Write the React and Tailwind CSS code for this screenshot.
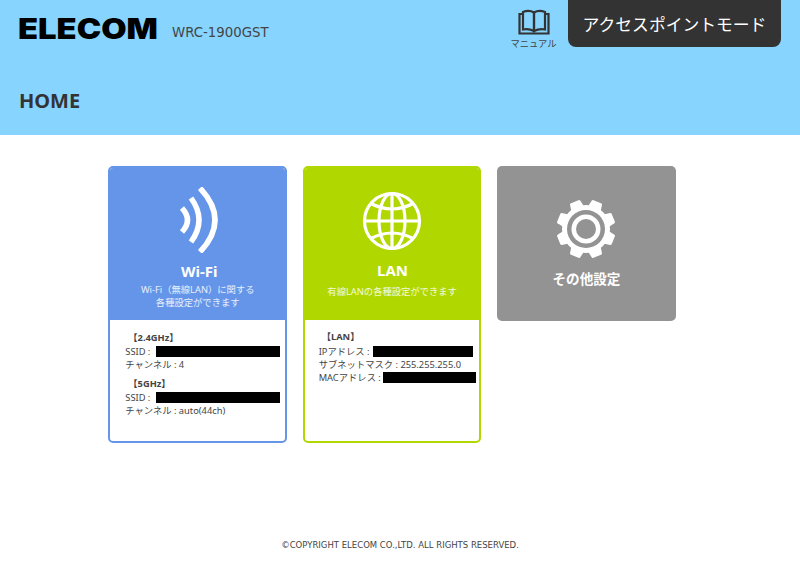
const font = { fontFamily: '"DejaVu Sans", "Noto Sans CJK JP", sans-serif' }
const noto = { fontFamily: '"Noto Sans", "Noto Sans CJK JP", sans-serif' }

function WifiIcon() {
    return (
        <svg width="40" height="66" viewBox="0 0 40 66" fill="none" stroke="white" strokeWidth="5.5">
            <path d="M2 21Q13 33 2 45" />
            <path d="M11 11Q27 33 11 55" />
            <path d="M20 1Q50 33 20 65" />
        </svg>
    )
}

function GlobeIcon() {
    return (
        <svg width="60" height="60" viewBox="0 0 60 60" fill="none" stroke="white" strokeWidth="3.2">
            <circle cx="30" cy="30" r="27.5" />
            <ellipse cx="30" cy="30" rx="13" ry="27.5" />
            <path d="M30 2.5V57.5M2.5 30H57.5" />
            <path d="M8 12Q30 24 52 12M8 48Q30 36 52 48" />
        </svg>
    )
}

function GearIcon() {
    const teeth = [22.5, 67.5, 112.5, 157.5, 202.5, 247.5, 292.5, 337.5]
    return (
        <svg width="60" height="60" viewBox="0 0 60 60">
            {teeth.map((a) => (
                <path
                    key={a}
                    d="M22.5 12L24.5 1.5Q24.8 0.5 26 0.5H34Q35.2 0.5 35.5 1.5L37.5 12Z"
                    fill="white"
                    transform={`rotate(${a} 30 30)`}
                />
            ))}
            <circle cx="30" cy="30" r="24" fill="white" />
            <circle cx="30" cy="30" r="19" fill="#939393" />
            <circle cx="30" cy="30" r="14.5" fill="white" />
            <circle cx="30" cy="30" r="10" fill="#939393" />
        </svg>
    )
}

function BookIcon() {
    return (
        <svg width="32" height="26" viewBox="0 0 32 26" fill="none" stroke="#333" strokeWidth="2.2">
            <path d="M5 3Q11 0.5 16 3.5V22Q11 19.5 5 20.5Z" />
            <path d="M27 3Q21 0.5 16 3.5V22Q21 19.5 27 20.5Z" />
            <path d="M5 5H1.5V24.5H30.5V5H27" />
        </svg>
    )
}

function Masked({ className }) {
    return <span className={`inline-block h-[11px] bg-black align-[-2px] ${className}`} />
}

function App() {
    return (
        <div className="min-h-[569px] bg-white text-[#333]" style={font}>
            <header className="h-[135px] bg-[#87d4ff] relative">
                <div className="flex items-start justify-between">
                    <div className="flex items-center pl-[18px] pt-[12px]">
                        <span
                            className="w-[139px] block origin-left scale-x-[1.17] text-[28px] leading-[34px] font-black text-black"
                            style={{ fontFamily: 'Inter, sans-serif' }}
                        >
                            ELECOM
                        </span>
                        <span className="ml-[15px] mt-[7px] text-[13.3px] leading-5 text-[#444]">WRC-1900GST</span>
                    </div>
                    <div className="flex items-start">
                        <div className="mt-[9px] mr-[12px] flex flex-col items-center w-[45px]">
                            <BookIcon />
                            <span className="mt-[3px] text-[9.3px] leading-3 text-[#444] whitespace-nowrap">マニュアル</span>
                        </div>
                        <div className="mr-[19px] h-[47px] w-[213px] rounded-b-lg bg-[#333] flex items-center justify-center pt-[5px] text-[16.8px] text-white">
                            アクセスポイントモード
                        </div>
                    </div>
                </div>
                <h1 className="pl-[19px] mt-[37px] text-[20px] leading-7 font-bold text-[#333]" style={noto}>HOME</h1>
            </header>

            <main className="flex gap-[15.6px] pl-[108.3px] pt-[31px]" style={noto}>
                <section className="w-[178.8px] h-[277px] rounded-[5px] border-2 border-[#6495e8] bg-white overflow-hidden">
                    <div className="-mx-[2px] -mt-[2px] h-[154px] bg-[#6495e8] flex flex-col items-center pt-[21px] text-white">
                        <div className="pl-[4px]">
                            <WifiIcon />
                        </div>
                        <h2 className="mt-[8px] pl-[3px] text-[15px] leading-5 font-bold">Wi-Fi</h2>
                        <p className="mt-[2px] text-[9.3px] leading-[13px] text-center text-white/85">
                            Wi-Fi（無線LAN）に関する
                            <br />
                            各種設定ができます
                        </p>
                    </div>
                    <div className="pl-[15px] pt-[11px] text-[9.3px] leading-[13px] text-[#444]">
                        <p className="font-bold pl-[3px]">【2.4GHz】</p>
                        <p className="mt-[1px] whitespace-nowrap">SSID : <Masked className="w-[124px] ml-[3px]" /></p>
                        <p>チャンネル : 4</p>
                        <p className="font-bold pl-[3px] mt-[6px]">【5GHz】</p>
                        <p className="mt-[1px] whitespace-nowrap">SSID : <Masked className="w-[124px] ml-[3px]" /></p>
                        <p>チャンネル : auto(44ch)</p>
                    </div>
                </section>

                <section className="w-[178.8px] h-[277px] rounded-[5px] border-2 border-[#b0d800] bg-white overflow-hidden">
                    <div className="-mx-[2px] -mt-[2px] h-[154px] bg-[#b0d800] flex flex-col items-center pt-[25px] text-white">
                        <GlobeIcon />
                        <h2 className="mt-[9px] pl-[1px] text-[15px] leading-5 font-bold">LAN</h2>
                        <p className="mt-[5px] text-[9.3px] leading-[13px] text-center text-white/85">有線LANの各種設定ができます</p>
                    </div>
                    <div className="pl-[14px] pt-[10px] text-[9.3px] leading-[13px] text-[#444]">
                        <p className="font-bold pl-[3px]">【LAN】</p>
                        <p className="mt-[2px] whitespace-nowrap">IPアドレス : <Masked className="w-[100px] ml-[1px]" /></p>
                        <p className="whitespace-nowrap">サブネットマスク : 255.255.255.0</p>
                        <p className="whitespace-nowrap">MACアドレス : <Masked className="w-[93px]" /></p>
                    </div>
                </section>

                <section className="w-[178.8px] h-[155px] rounded-[5px] bg-[#939393] flex flex-col items-center pt-[33px] text-white">
                    <GearIcon />
                    <h2 className="mt-[10px] text-[13.6px] leading-5 font-bold">その他設定</h2>
                </section>
            </main>

            <footer className="mt-[96px] text-center text-[8.5px] leading-3 text-[#444]">©COPYRIGHT ELECOM CO.,LTD. ALL RIGHTS RESERVED.</footer>
        </div>
    )
}

export default App
